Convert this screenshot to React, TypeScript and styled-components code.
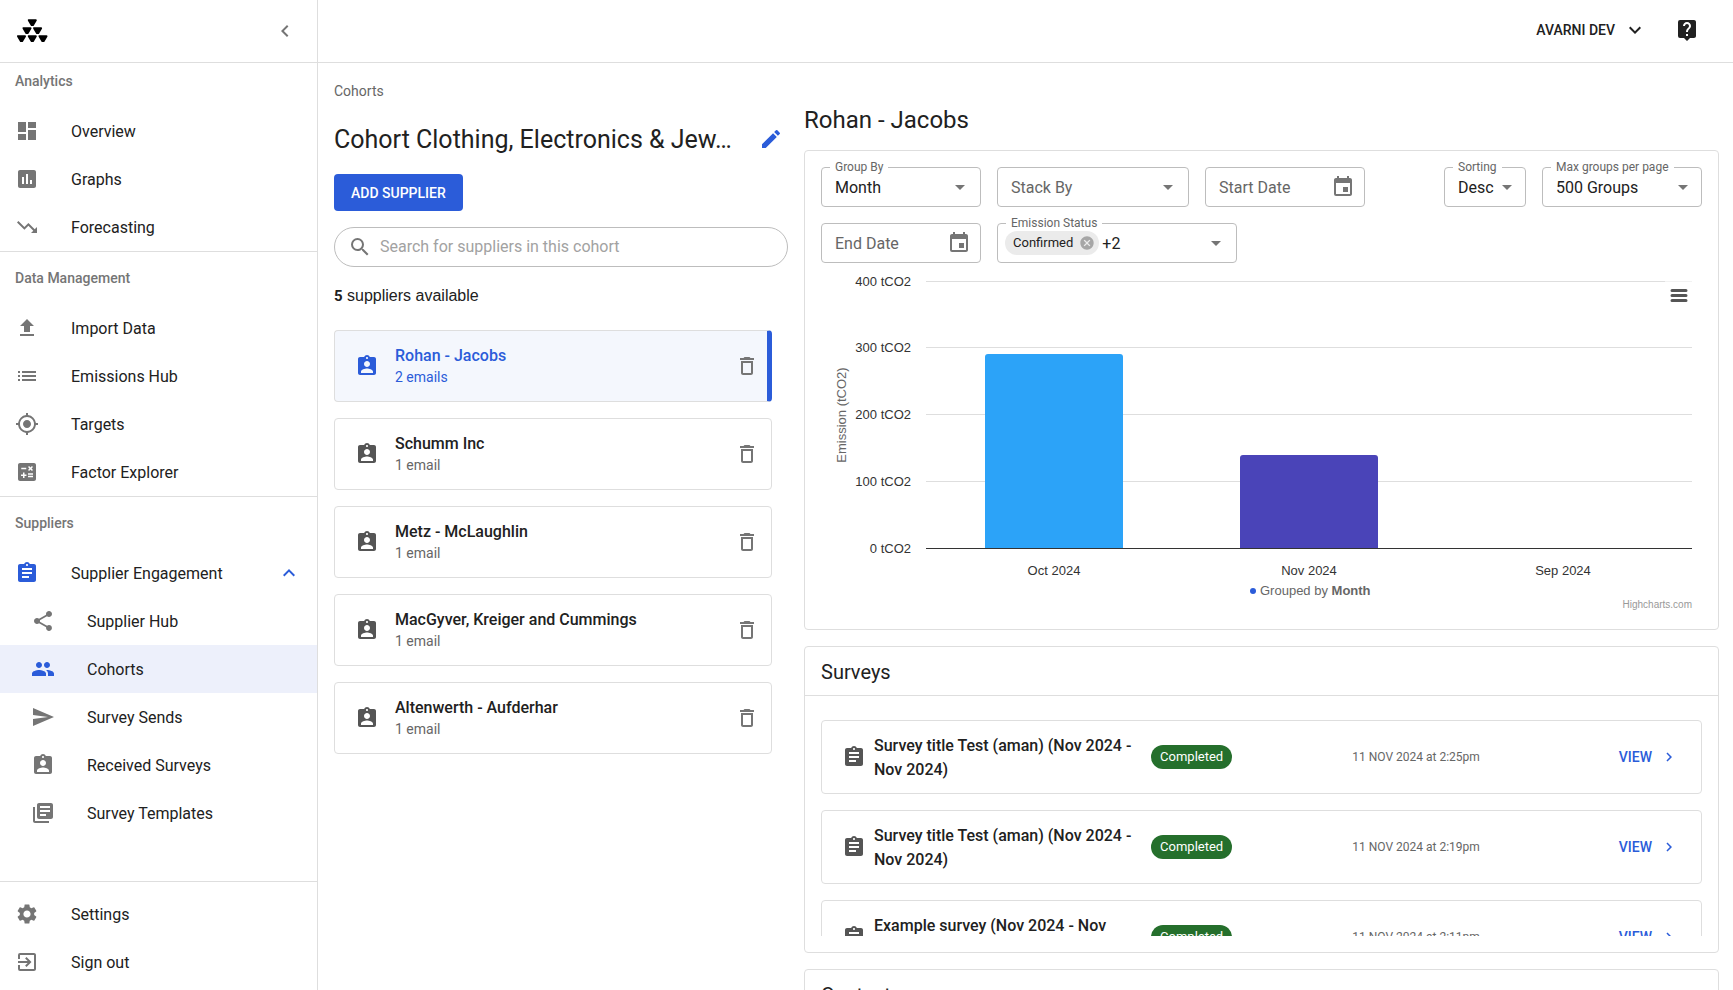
import React from "react";
import styled, { createGlobalStyle, css } from "styled-components";
import type { IconType } from "react-icons";
import {
  MdArrowDropDown,
  MdAssessment,
  MdAssignment,
  MdAssignmentInd,
  MdCalculate,
  MdCancel,
  MdChevronLeft,
  MdChevronRight,
  MdDashboard,
  MdDeleteOutline,
  MdEdit,
  MdEvent,
  MdExitToApp,
  MdExpandLess,
  MdExpandMore,
  MdLibraryBooks,
  MdList,
  MdLiveHelp,
  MdMyLocation,
  MdPeople,
  MdSearch,
  MdSend,
  MdSettings,
  MdShare,
  MdTrendingDown,
} from "react-icons/md";

const color = {
  text: "#212121",
  muted: "#666666",
  icon: "#757575",
  primary: "#2b5cd9",
  border: "#dedede",
  field: "#bdbdbd",
  activeNav: "#edf0fb",
  activeCard: "#f4f7fd",
  success: "#256f2c",
};

const GlobalStyle = createGlobalStyle`
  *, *::before, *::after { box-sizing: border-box; }
  body {
    margin: 0;
    background: #fff;
    color: ${color.text};
    font-family: Roboto, "Liberation Sans", sans-serif;
    font-size: 16px;
    line-height: 24px;
  }
  button, input, select { font: inherit; color: inherit; }
  button { border: 0; padding: 0; background: none; cursor: pointer; }
  h1, h2, h3, p, ul { margin: 0; padding: 0; font-weight: 400; }
  ul { list-style: none; }
  a { color: inherit; text-decoration: none; }
  svg { flex: none; }
`;

/* ---------- shell ---------- */

const Shell = styled.div`
  display: flex;
  height: 100vh;
  overflow: hidden;
`;

const Sidebar = styled.aside`
  display: flex;
  flex-direction: column;
  flex: 0 0 318px;
  border-right: 1px solid ${color.border};
`;

const Brand = styled.div`
  display: flex;
  align-items: center;
  justify-content: space-between;
  height: 63px;
  padding: 0 20px 0 16px;
  border-bottom: 1px solid ${color.border};
  color: ${color.icon};
`;

const IconButton = styled.button`
  display: flex;
  align-items: center;
  justify-content: center;
`;

const Nav = styled.nav`
  flex: 1;
  min-height: 0;
  overflow: hidden;
`;

const NavSection = styled.section`
  padding-top: 8px;
  border-bottom: 1px solid ${color.border};
  &:first-child { padding-top: 0; }
  &:last-child { border-bottom: 0; }
`;

const NavHeading = styled.h2`
  padding: 0 15px 8px;
  font-size: 14px;
  font-weight: 500;
  line-height: 36px;
  color: ${color.icon};
`;

const NavLink = styled.a<{ $nested?: boolean; $active?: boolean; $accent?: boolean }>`
  display: flex;
  align-items: center;
  gap: 32px;
  height: 48px;
  padding: 0 16px 0 ${(p) => (p.$nested ? 31 : 15)}px;
  background: ${(p) => (p.$active ? color.activeNav : "transparent")};
  > svg { color: ${(p) => (p.$active || p.$accent ? color.primary : color.icon)}; }
`;

const NavLabel = styled.span`
  flex: 1;
  padding-top: 2px;
`;

const SidebarFooter = styled.div`
  padding: 8px 0 4px;
  border-top: 1px solid ${color.border};
`;

const Content = styled.div`
  display: flex;
  flex-direction: column;
  flex: 1;
  min-width: 0;
`;

const TopBar = styled.header`
  display: flex;
  align-items: center;
  justify-content: flex-end;
  flex: 0 0 63px;
  gap: 28px;
  padding: 0 34px 2px;
  border-bottom: 1px solid ${color.border};
`;

const AccountButton = styled.button`
  display: flex;
  align-items: center;
  gap: 8px;
  font-size: 14px;
  font-weight: 500;
`;

const Main = styled.main`
  display: grid;
  grid-template-columns: minmax(0, 454fr) minmax(0, 915fr);
  gap: 16px;
  flex: 1;
  min-height: 0;
  padding: 0 14px 0 16px;
  overflow: hidden;
`;

/* ---------- cohort column ---------- */

const CohortColumn = styled.section`
  padding-top: 18px;
`;

const Breadcrumb = styled.a`
  display: block;
  font-size: 14px;
  line-height: 20px;
  color: ${color.muted};
`;

const TitleRow = styled.div`
  display: flex;
  align-items: flex-start;
  justify-content: space-between;
  gap: 16px;
  margin: 22px 0 17px;
  padding-right: 5px;
`;

const PageTitle = styled.h1`
  overflow: hidden;
  text-overflow: ellipsis;
  white-space: nowrap;
  font-size: 25px;
  line-height: 34px;
`;

const EditButton = styled(IconButton)`
  height: 32px;
  color: ${color.primary};
`;

const PrimaryButton = styled.button`
  height: 37px;
  padding: 0 17px;
  border-radius: 4px;
  background: ${color.primary};
  color: #fff;
  font-size: 14px;
  font-weight: 500;
`;

const SearchBox = styled.label`
  display: flex;
  align-items: center;
  gap: 8px;
  height: 40px;
  margin-top: 16px;
  padding: 0 14px 0 13px;
  border: 1px solid ${color.field};
  border-radius: 20px;
  color: ${color.icon};
  input {
    flex: 1;
    min-width: 0;
    padding: 0;
    border: 0;
    outline: 0;
    background: none;
    color: ${color.text};
  }
  input::placeholder { color: #a2a2a2; opacity: 1; }
`;

const Count = styled.p`
  margin: 17px 0 22px;
  font-family: "Liberation Sans", sans-serif;
  b {
    font-family: Roboto, sans-serif;
    font-size: 15px;
  }
`;

const SupplierList = styled.ul`
  display: flex;
  flex-direction: column;
  gap: 16px;
  padding-right: 16px;
`;

const SupplierCard = styled.li<{ $selected?: boolean }>`
  display: flex;
  align-items: center;
  height: 72px;
  padding: 0 12px 0 20px;
  border: 1px solid ${color.border};
  border-radius: 4px;
  color: #555;
  ${(p) =>
    p.$selected &&
    css`
      padding-right: 8px;
      border-right: 5px solid ${color.primary};
      background: ${color.activeCard};
      color: ${color.primary};
    `}
`;

const SupplierText = styled.a<{ $selected?: boolean }>`
  flex: 1;
  min-width: 0;
  padding-left: 16px;
  color: ${(p) => (p.$selected ? color.primary : color.text)};
`;

const SupplierName = styled.h3`
  font-size: 16px;
  font-weight: 500;
  line-height: 22px;
`;

const SupplierMeta = styled.p<{ $selected?: boolean }>`
  font-size: 14px;
  line-height: 20px;
  color: ${(p) => (p.$selected ? color.primary : color.muted)};
`;

const DeleteButton = styled(IconButton)`
  color: ${color.icon};
`;

/* ---------- detail column ---------- */

const DetailColumn = styled.section`
  display: flex;
  flex-direction: column;
  gap: 16px;
  padding-top: 40px;
  overflow: hidden;
`;

const DetailTitle = styled.h2`
  margin-bottom: -3px;
  font-size: 24px;
  line-height: 34px;
`;

const Card = styled.section`
  flex: none;
  border: 1px solid ${color.border};
  border-radius: 4px;
`;

const ChartCard = styled(Card)`
  padding: 16px;
`;

const Filters = styled.div`
  display: flex;
  align-items: flex-start;
  justify-content: space-between;
  gap: 16px;
`;

const FilterGroup = styled.div<{ $grow?: boolean }>`
  display: flex;
  flex-wrap: ${(p) => (p.$grow ? "wrap" : "nowrap")};
  flex: ${(p) => (p.$grow ? "1" : "none")};
  gap: 16px;
`;

const Field = styled.div<{ $width: number }>`
  position: relative;
  display: flex;
  align-items: center;
  width: ${(p) => p.$width}px;
  height: 40px;
  border: 1px solid ${color.field};
  border-radius: 4px;
  color: ${color.icon};
`;

const FloatingLabel = styled.label`
  position: absolute;
  top: -9px;
  left: 8px;
  padding: 0 5px;
  background: #fff;
  font-size: 12px;
  line-height: 16px;
  color: ${color.muted};
  white-space: nowrap;
`;

const Select = styled.select<{ $empty?: boolean }>`
  appearance: none;
  width: 100%;
  height: 100%;
  padding: 2px 30px 0 13px;
  border: 0;
  outline: 0;
  background: none;
  color: ${(p) => (p.$empty ? color.muted : color.text)};
`;

const SelectArrow = styled(MdArrowDropDown)<{ $inset: number }>`
  position: absolute;
  right: ${(p) => p.$inset}px;
  pointer-events: none;
`;

const DateInput = styled.input`
  flex: 1;
  min-width: 0;
  padding: 2px 0 0 13px;
  border: 0;
  outline: 0;
  background: none;
  &::placeholder { color: ${color.muted}; opacity: 1; }
`;

const CalendarButton = styled(IconButton)`
  margin-right: 9px;
`;

const Chip = styled.span`
  display: flex;
  align-items: center;
  gap: 6px;
  height: 24px;
  margin: 0 3px 0 7px;
  padding: 0 4px 0 8px;
  border-radius: 12px;
  background: #ebebeb;
  font-size: 13px;
  color: ${color.text};
  button { color: #a6a6a6; }
`;

const ChipOverflow = styled.span`
  flex: 1;
  padding-top: 2px;
  color: ${color.text};
`;

const OpenButton = styled(IconButton)`
  margin-right: 8px;
`;

const ChartFrame = styled.div`
  position: relative;
`;

const ChartSvg = styled.svg`
  display: block;
  width: 100%;
  height: auto;
  font-family: "Liberation Sans", Helvetica, sans-serif;
  font-size: 13px;
`;

const ChartMenuButton = styled.button`
  position: absolute;
  top: 18px;
  right: 9px;
  display: flex;
  align-items: center;
  justify-content: center;
  width: 28px;
  height: 28px;
  background: rgba(255, 255, 255, 0.6);
`;

const CardHeader = styled.h2`
  padding: 2px 16px 0;
  border-bottom: 1px solid ${color.border};
  font-size: 20px;
  line-height: 46px;
`;

const SurveyScroll = styled.ul`
  display: flex;
  flex-direction: column;
  gap: 16px;
  height: 224px;
  margin: 16px;
  padding-top: 8px;
  overflow-y: auto;
  scrollbar-width: none;
`;

const SurveyRow = styled.li`
  display: grid;
  grid-template-columns: 7fr 4fr 4fr 4fr;
  align-items: center;
  flex: none;
  height: 74px;
  padding: 0 20px;
  border: 1px solid ${color.border};
  border-radius: 4px;
`;

const SurveyTitle = styled.div`
  display: flex;
  align-items: center;
  gap: 8px;
  padding-right: 16px;
  color: #555;
  h3 {
    padding-top: 2px;
    font-size: 16px;
    font-weight: 500;
    color: ${color.text};
  }
`;

const StatusBadge = styled.span`
  justify-self: start;
  padding: 0 9px;
  border-radius: 12px;
  background: ${color.success};
  color: #fff;
  font-size: 13px;
`;

const SurveyDate = styled.time`
  text-align: center;
  font-size: 12px;
  color: ${color.muted};
`;

const ViewLink = styled.a`
  display: flex;
  align-items: center;
  justify-self: end;
  gap: 8px;
  padding-right: 3px;
  font-size: 14px;
  font-weight: 500;
  color: ${color.primary};
`;

/* ---------- data ---------- */

type NavEntry = { label: string; icon: IconType };

const UploadIcon: IconType = () => (
  <svg width="24" height="24" viewBox="0 0 24 24" fill="currentColor" aria-hidden="true">
    <path d="M9 16h6v-6h4l-7-7-7 7h4zm-4 2h14v2H5z" />
  </svg>
);

const analytics: NavEntry[] = [
  { label: "Overview", icon: MdDashboard },
  { label: "Graphs", icon: MdAssessment },
  { label: "Forecasting", icon: MdTrendingDown },
];

const dataManagement: NavEntry[] = [
  { label: "Import Data", icon: UploadIcon },
  { label: "Emissions Hub", icon: MdList },
  { label: "Targets", icon: MdMyLocation },
  { label: "Factor Explorer", icon: MdCalculate },
];

const engagement: NavEntry[] = [
  { label: "Supplier Hub", icon: MdShare },
  { label: "Cohorts", icon: MdPeople },
  { label: "Survey Sends", icon: MdSend },
  { label: "Received Surveys", icon: MdAssignmentInd },
  { label: "Survey Templates", icon: MdLibraryBooks },
];

const account: NavEntry[] = [
  { label: "Settings", icon: MdSettings },
  { label: "Sign out", icon: MdExitToApp },
];

const suppliers = [
  { name: "Rohan - Jacobs", emails: "2 emails" },
  { name: "Schumm Inc", emails: "1 email" },
  { name: "Metz - McLaughlin", emails: "1 email" },
  { name: "MacGyver, Kreiger and Cummings", emails: "1 email" },
  { name: "Altenwerth - Aufderhar", emails: "1 email" },
];

const surveys = [
  { title: "Survey title Test (aman) (Nov 2024 - Nov 2024)", date: "11 NOV 2024 at 2:25pm" },
  { title: "Survey title Test (aman) (Nov 2024 - Nov 2024)", date: "11 NOV 2024 at 2:19pm" },
  { title: "Example survey (Nov 2024 - Nov 2024)", date: "11 NOV 2024 at 2:11pm" },
];

const gridLines = [
  { label: "400 tCO2", y: 18 },
  { label: "300 tCO2", y: 84 },
  { label: "200 tCO2", y: 151 },
  { label: "100 tCO2", y: 218 },
  { label: "0 tCO2", y: 285 },
];

const months = [
  { label: "Oct 2024", x: 233, top: 91, fill: "#2ca3f8" },
  { label: "Nov 2024", x: 488, top: 192, fill: "#4a44b8" },
  { label: "Sep 2024", x: 742 },
];

/* ---------- parts ---------- */

const Logo = () => (
  <svg width="32" height="24" viewBox="0 0 32 24" role="img" aria-label="Avarni">
    <g fill="#000" stroke="#000" strokeWidth="2" strokeLinejoin="round">
      {[
        [16.3, 0.2],
        [11, 8.2],
        [21.6, 8.2],
        [5.5, 16.2],
        [16.3, 16.2],
        [27, 16.2],
      ].map(([x, y]) => (
        <path key={`${x}-${y}`} d={`M${x - 3.5} ${y + 1}h7l-2.8 4.8h-1.4z`} />
      ))}
    </g>
  </svg>
);

const NavItems = ({ items, nested }: { items: NavEntry[]; nested?: boolean }) => (
  <>
    {items.map(({ label, icon: Icon }) => (
      <li key={label}>
        <NavLink href="#" $nested={nested} $active={label === "Cohorts"}>
          <Icon size={24} />
          <NavLabel>{label}</NavLabel>
        </NavLink>
      </li>
    ))}
  </>
);

type SelectFieldProps = { id: string; label: string; value?: string; width: number; inset?: number };

const SelectField = ({ id, label, value, width, inset = 8 }: SelectFieldProps) => (
  <Field $width={width}>
    {value && <FloatingLabel htmlFor={id}>{label}</FloatingLabel>}
    <Select id={id} $empty={!value} aria-label={value ? undefined : label}>
      <option>{value ?? label}</option>
    </Select>
    <SelectArrow size={24} $inset={inset} />
  </Field>
);

const DateField = ({ label }: { label: string }) => (
  <Field $width={160}>
    <DateInput type="text" placeholder={label} aria-label={label} />
    <CalendarButton type="button" aria-label={`Choose ${label.toLowerCase()}`}>
      <MdEvent size={24} />
    </CalendarButton>
  </Field>
);

const EmissionChart = () => (
  <ChartFrame>
    <ChartSvg viewBox="0 0 881 350" role="img" aria-label="Emission (tCO2) grouped by month">
      {gridLines.map(({ label, y }) => (
        <g key={label}>
          <path d={`M105 ${y + 0.5}H871`} stroke="#dedede" />
          <text x="90" y={y + 5} textAnchor="end" fill="#333">
            {label}
          </text>
        </g>
      ))}
      {months.map(({ label, x, top, fill }) => (
        <g key={label}>
          {top && (
            <path
              d={`M${x - 69} 285V${top + 3}q0 -3 3 -3H${x + 66}q3 0 3 3V285z`}
              fill={fill}
            />
          )}
          <text x={x} y="312" textAnchor="middle" fill="#333">
            {label}
          </text>
        </g>
      ))}
      <path d="M105 285.5H871" stroke="#333" />
      <text transform="translate(25 152) rotate(-90)" textAnchor="middle" fill="#666">
        Emission (tCO2)
      </text>
      <circle cx="432" cy="328" r="3" fill={color.primary} />
      <text x="439" y="332" fill="#666">
        Grouped by <tspan fontWeight="700">Month</tspan>
      </text>
      <a href="#">
        <text x="871" y="345" textAnchor="end" fill="#999" fontSize="10">
          Highcharts.com
        </text>
      </a>
    </ChartSvg>
    <ChartMenuButton type="button" aria-label="View chart menu">
      <svg width="18" height="14" viewBox="0 0 18 14" aria-hidden="true">
        <path d="M2 2.5h14M2 7.5h14M2 12.5h14" stroke="#555" strokeWidth="3" strokeLinecap="round" />
      </svg>
    </ChartMenuButton>
  </ChartFrame>
);

export default function App() {
  return (
    <>
      <GlobalStyle />
      <Shell>
        <Sidebar>
          <Brand>
            <Logo />
            <IconButton type="button" aria-label="Collapse menu">
              <MdChevronLeft size={24} />
            </IconButton>
          </Brand>
          <Nav>
            <NavSection>
              <NavHeading>Analytics</NavHeading>
              <ul>
                <NavItems items={analytics} />
              </ul>
            </NavSection>
            <NavSection>
              <NavHeading>Data Management</NavHeading>
              <ul>
                <NavItems items={dataManagement} />
              </ul>
            </NavSection>
            <NavSection>
              <NavHeading>Suppliers</NavHeading>
              <ul>
                <li>
                  <NavLink href="#" $accent>
                    <MdAssignment size={24} />
                    <NavLabel>Supplier Engagement</NavLabel>
                    <MdExpandLess size={24} />
                  </NavLink>
                </li>
                <NavItems items={engagement} nested />
              </ul>
            </NavSection>
          </Nav>
          <SidebarFooter>
            <ul>
              <NavItems items={account} />
            </ul>
          </SidebarFooter>
        </Sidebar>

        <Content>
          <TopBar>
            <AccountButton type="button">
              AVARNI DEV
              <MdExpandMore size={24} />
            </AccountButton>
            <IconButton type="button" aria-label="Help">
              <MdLiveHelp size={24} />
            </IconButton>
          </TopBar>

          <Main>
            <CohortColumn>
              <Breadcrumb href="#">Cohorts</Breadcrumb>
              <TitleRow>
                <PageTitle>Cohort Clothing, Electronics &amp; Jew…</PageTitle>
                <EditButton type="button" aria-label="Edit cohort">
                  <MdEdit size={24} />
                </EditButton>
              </TitleRow>
              <PrimaryButton type="button">ADD SUPPLIER</PrimaryButton>
              <SearchBox>
                <MdSearch size={24} />
                <input
                  type="search"
                  aria-label="Search suppliers"
                  placeholder="Search for suppliers in this cohort"
                />
              </SearchBox>
              <Count>
                <b>5</b> suppliers available
              </Count>
              <SupplierList>
                {suppliers.map(({ name, emails }, i) => (
                  <SupplierCard key={name} $selected={i === 0}>
                    <MdAssignmentInd size={24} />
                    <SupplierText href="#" $selected={i === 0}>
                      <SupplierName>{name}</SupplierName>
                      <SupplierMeta $selected={i === 0}>{emails}</SupplierMeta>
                    </SupplierText>
                    <DeleteButton type="button" aria-label={`Delete ${name}`}>
                      <MdDeleteOutline size={24} />
                    </DeleteButton>
                  </SupplierCard>
                ))}
              </SupplierList>
            </CohortColumn>

            <DetailColumn>
              <DetailTitle>Rohan - Jacobs</DetailTitle>
              <ChartCard>
                <Filters>
                  <FilterGroup $grow>
                    <SelectField id="group-by" label="Group By" value="Month" width={160} />
                    <SelectField id="stack-by" label="Stack By" width={192} />
                    <DateField label="Start Date" />
                    <DateField label="End Date" />
                    <Field $width={240} role="group" aria-label="Emission Status">
                      <FloatingLabel as="span">Emission Status</FloatingLabel>
                      <Chip>
                        Confirmed
                        <IconButton type="button" aria-label="Remove Confirmed">
                          <MdCancel size={16} />
                        </IconButton>
                      </Chip>
                      <ChipOverflow>+2</ChipOverflow>
                      <OpenButton type="button" aria-label="Open emission status">
                        <MdArrowDropDown size={24} />
                      </OpenButton>
                    </Field>
                  </FilterGroup>
                  <FilterGroup>
                    <SelectField id="sorting" label="Sorting" value="Desc" width={82} inset={6} />
                    <SelectField
                      id="page-size"
                      label="Max groups per page"
                      value="500 Groups"
                      width={160}
                      inset={6}
                    />
                  </FilterGroup>
                </Filters>
                <EmissionChart />
              </ChartCard>

              <Card>
                <CardHeader>Surveys</CardHeader>
                <SurveyScroll>
                  {surveys.map(({ title, date }) => (
                    <SurveyRow key={date}>
                      <SurveyTitle>
                        <MdAssignment size={24} />
                        <h3>{title}</h3>
                      </SurveyTitle>
                      <StatusBadge>Completed</StatusBadge>
                      <SurveyDate>{date}</SurveyDate>
                      <ViewLink href="#">
                        VIEW
                        <MdChevronRight size={18} />
                      </ViewLink>
                    </SurveyRow>
                  ))}
                </SurveyScroll>
              </Card>

              <Card>
                <CardHeader>Contacts</CardHeader>
              </Card>
            </DetailColumn>
          </Main>
        </Content>
      </Shell>
    </>
  );
}
